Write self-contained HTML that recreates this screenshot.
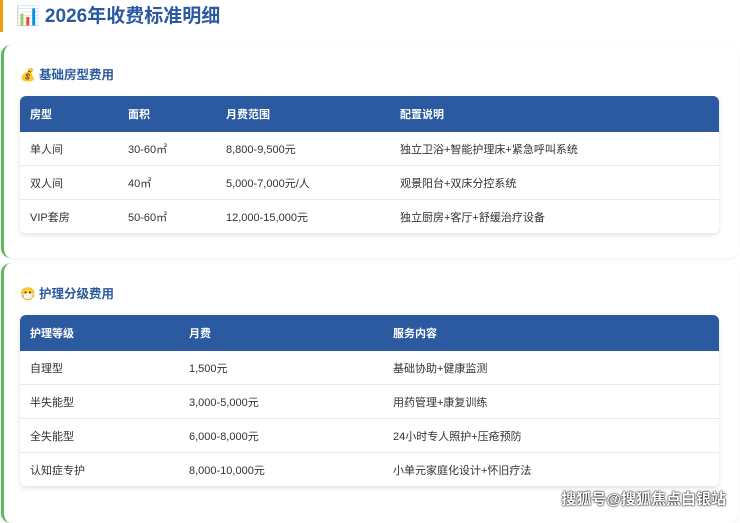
<!DOCTYPE html><html><head><meta charset="utf-8"><style>
body{margin:0;width:740px;height:517px;overflow:hidden;background:#fff;font-family:"Liberation Sans","Noto Sans CJK SC",sans-serif;position:relative}
.bar{position:absolute;left:0;top:0;width:3px;height:32px;background:#f39c12}
h1{position:absolute;left:16px;top:3px;margin:0;font-size:19px;font-weight:bold;color:#2c5aa0;line-height:28px}
.card{position:absolute;left:1px;width:734px;border-left:3px solid #5cb85c;border-radius:10px;background:#fff;box-shadow:0 1px 4px rgba(0,0,0,.06)}
.st{position:absolute;left:20px;font-size:12.5px;font-weight:bold;color:#2c5aa0}
table{position:absolute;left:20px;width:699px;border-collapse:collapse;font-size:11px;color:#333;border-radius:6px;overflow:hidden;box-shadow:0 2px 5px rgba(0,0,0,.12)}
th{background:#2c5aa0;color:#fff;text-align:left;font-weight:bold;height:36px;padding:0 0 0 10px}
td{height:33px;padding:0 0 0 10px;border-bottom:1px solid #e8e8e8;background:#fff}
tr:last-child td{border-bottom:none}
.wm{position:absolute;right:14px;bottom:8px;font-size:15px;color:#fff;text-shadow:0 0 2px #000,0 0 1px #000;font-weight:bold}
</style></head><body>
<div class="bar"></div>
<h1>📊 2026年收费标准明细</h1>
<div class="card" style="top:45px;height:213px"></div>
<div class="card" style="top:263px;height:260px"></div>
<div class="st" style="top:64px">💰 基础房型费用</div>
<table style="top:96px">
<tr><th style="width:88px">房型</th><th style="width:88px">面积</th><th style="width:164px">月费范围</th><th>配置说明</th></tr>
<tr><td>单人间</td><td>30-60㎡</td><td>8,800-9,500元</td><td>独立卫浴+智能护理床+紧急呼叫系统</td></tr>
<tr><td>双人间</td><td>40㎡</td><td>5,000-7,000元/人</td><td>观景阳台+双床分控系统</td></tr>
<tr><td>VIP套房</td><td>50-60㎡</td><td>12,000-15,000元</td><td>独立厨房+客厅+舒缓治疗设备</td></tr>
</table>
<div class="st" style="top:283px">😷 护理分级费用</div>
<table style="top:315px">
<tr><th style="width:149px">护理等级</th><th style="width:194px">月费</th><th>服务内容</th></tr>
<tr><td>自理型</td><td>1,500元</td><td>基础协助+健康监测</td></tr>
<tr><td>半失能型</td><td>3,000-5,000元</td><td>用药管理+康复训练</td></tr>
<tr><td>全失能型</td><td>6,000-8,000元</td><td>24小时专人照护+压疮预防</td></tr>
<tr><td>认知症专护</td><td>8,000-10,000元</td><td>小单元家庭化设计+怀旧疗法</td></tr>
</table>
<div class="wm">搜狐号@搜狐焦点白银站</div>
</body></html>
